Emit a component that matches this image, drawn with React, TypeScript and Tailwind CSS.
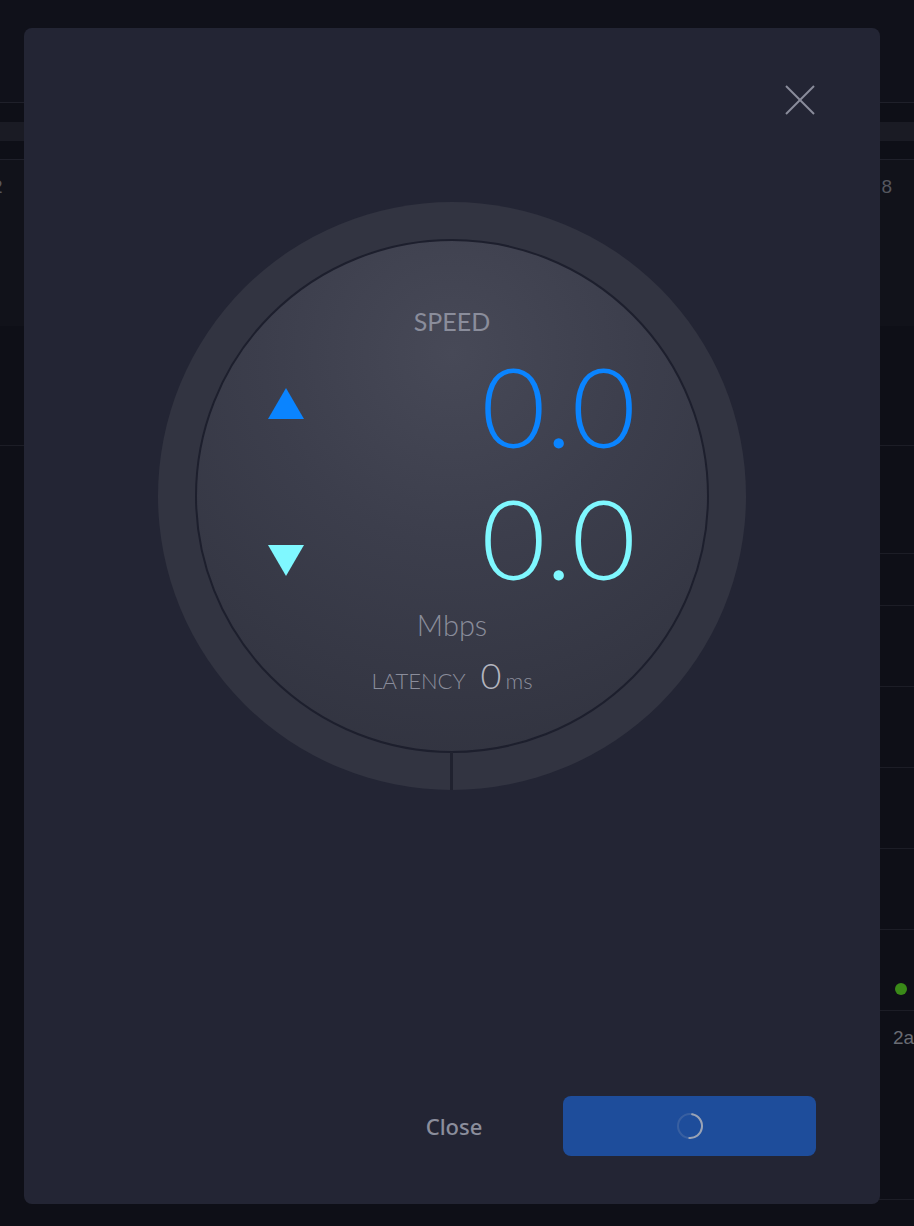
import React from "react";

function UpTriangle() {
  return (
    <svg width="36" height="31" viewBox="0 0 36 31" className="block">
      <polygon points="18,0 36,31 0,31" fill="#0a84ff" />
    </svg>
  );
}

function DownTriangle() {
  return (
    <svg width="36" height="31" viewBox="0 0 36 31" className="block">
      <polygon points="0,0 36,0 18,31" fill="#7ff8ff" />
    </svg>
  );
}

function Spinner() {
  return (
    <svg width="30" height="30" viewBox="0 0 30 30" className="block">
      <circle cx="15" cy="15" r="12" fill="none" stroke="rgba(120,140,175,0.3)" strokeWidth="2" />
      <circle
        cx="15"
        cy="15"
        r="12"
        fill="none"
        stroke="#9aa3b5"
        strokeWidth="2"
        strokeDasharray="36 100"
        strokeLinecap="round"
        transform="rotate(-80 15 15)"
      />
    </svg>
  );
}

function Gauge() {
  return (
    <div className="relative mx-auto h-[588px] w-[588px] rounded-full bg-[#323441] p-[37px]">
      <div className="relative flex h-[514px] w-[514px] flex-col items-center rounded-full border-2 border-[#1d1f2d] bg-[radial-gradient(circle_at_50%_22%,#474957_0%,#3c3e4c_40%,#2f313d_100%)] pt-[68px] font-['Lato',sans-serif]">
        <div className="text-[25px] font-normal uppercase leading-none text-[#8a8d9b]">Speed</div>
        <div className="mt-[16px] flex w-full items-start justify-between pl-[71px] pr-[71px]">
          <div className="mt-[38px]">
            <UpTriangle />
          </div>
          <div className="text-[111px] font-light leading-none text-[#0a84ff]">0.0</div>
        </div>
        <div className="mt-[21px] flex w-full items-start justify-between pl-[71px] pr-[71px]">
          <div className="mt-[63px]">
            <DownTriangle />
          </div>
          <div className="text-[111px] font-light leading-none text-[#7ff8ff]">0.0</div>
        </div>
        <div className="mt-[17px] text-[29px] font-light leading-none text-[#8a8d9b]">Mbps</div>
        <div className="mt-[18px] flex items-baseline leading-none">
          <span className="text-[22px] font-light uppercase text-[#8a8d9b]">Latency</span>
          <span className="ml-[15px] text-[36px] font-light text-[#b3b5bf]">0</span>
          <span className="ml-[4px] text-[22px] font-light text-[#8a8d9b]">ms</span>
        </div>
      </div>
      <div className="absolute bottom-0 left-[292px] h-[38px] w-[3px] bg-[#20222f]" />
    </div>
  );
}

export default function App() {
  return (
    <div className="relative h-[1226px] w-full overflow-hidden bg-[#0e0f17] font-['Liberation_Sans',sans-serif]">
      {/* background page */}
      <div className="h-[103px] border-b border-[#1f202a] bg-[#10111a]" />
      <div className="h-[19px]" />
      <div className="h-[19px] bg-[#1a1b24]" />
      <div className="h-[19px] border-b border-[#1f202a]" />
      <div className="flex h-[166px] items-start justify-between bg-[#11121a] pt-[17px] text-[19px] leading-none text-[#55575f]">
        <span className="-ml-[8px]">2</span>
        <span className="mr-[22px]">8</span>
      </div>
      <div className="h-[120px] border-b border-[#1c1d26]" />
      <div className="ml-[600px]">
        <div className="h-[107px]" />
        <div className="h-[52px] border-t border-[#1c1d26]" />
        <div className="h-[81px] border-t border-[#1c1d26]" />
        <div className="h-[81px] border-t border-[#1c1d26]" />
        <div className="h-[81px] border-t border-[#1c1d26]" />
        <div className="h-[81px] border-t border-[#1c1d26]" />
        <div className="flex h-[81px] items-start border-t border-[#1c1d26] pl-[295px] pt-[53px]">
          <span className="h-[12px] w-[12px] rounded-full bg-[#3a8a18]" />
        </div>
        <div className="h-[190px] border-t border-b border-[#1c1d26] pl-[293px] pt-[17px] text-[19px] leading-none text-[#6a6c74]">
          2a
        </div>
      </div>

      {/* modal overlay */}
      <div className="absolute inset-0 pl-[24px] pt-[28px]">
        <div className="flex h-[1176px] w-[856px] flex-col rounded-[8px] bg-[#232534]">
          <div className="flex justify-end pr-[64px] pt-[56px]">
            <button className="flex h-[32px] w-[32px] items-center justify-center">
              <svg width="32" height="32" viewBox="0 0 32 32" className="block">
                <line x1="2" y1="2" x2="30" y2="30" stroke="#8a8d9b" strokeWidth="2" />
                <line x1="30" y1="2" x2="2" y2="30" stroke="#8a8d9b" strokeWidth="2" />
              </svg>
            </button>
          </div>
          <div className="mt-[86px]">
            <Gauge />
          </div>
          <div className="flex-1" />
          <div className="flex items-center justify-end gap-[39px] pb-[48px] pr-[64px]">
            <button className="h-[60px] w-[140px] font-['Noto_Sans',sans-serif] text-[22px] font-medium text-[#8b8e9c]">
              Close
            </button>
            <button className="flex h-[60px] w-[253px] items-center justify-center rounded-[8px] bg-[#1e4d9b]">
              <Spinner />
            </button>
          </div>
        </div>
      </div>
    </div>
  );
}
